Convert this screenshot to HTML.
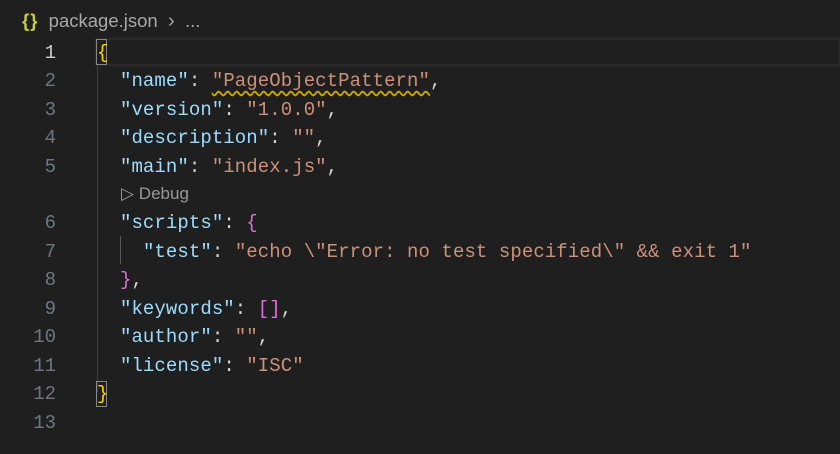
<!DOCTYPE html>
<html><head><style>
body{margin:0;width:840px;height:454px;background:#1f1f1f;overflow:hidden;position:relative;font-family:"Liberation Mono",monospace;}
.bc{position:absolute;top:10px;left:22px;font:18.5px "Liberation Sans",sans-serif;color:#a9a9a9;white-space:pre}
.bc .ic{color:#cbcb41;font-weight:bold;letter-spacing:1px}
.ln{position:absolute;left:0;width:56px;text-align:right;color:#6e7681;font-size:19px;line-height:28px}
.cd{position:absolute;left:97px;font-size:19px;line-height:28px;white-space:pre;color:#d4d4d4;letter-spacing:0.08px}
.k{color:#9cdcfe}.s{color:#ce9178}.y{color:#ffd700}.p{color:#da70d6}
.cur{position:absolute;left:94px;right:0;top:38px;height:28px;border:2px solid #282828;box-sizing:border-box}
.g{position:absolute;width:1px;background:#404040}
</style></head><body>
<div class="bc"><span class="ic">{}</span>  package.json  <span style="font-size:20px">›</span>  ...</div>
<div class="cur"></div>
<div class="g" style="left:97px;top:66px;height:326px"></div>
<div class="g" style="left:120px;top:236px;height:28px;background:#5a5a5a"></div>
<div style="position:absolute;left:96px;top:39px;width:11px;height:26px;border:1px solid #888;box-sizing:border-box"></div>
<div class="ln" style="top:39px;color:#ccc">1</div>
<div class="ln" style="top:67px">2</div>
<div class="ln" style="top:96px">3</div>
<div class="ln" style="top:124px">4</div>
<div class="ln" style="top:153px">5</div>
<div class="ln" style="top:209px">6</div>
<div class="ln" style="top:238px">7</div>
<div class="ln" style="top:266px">8</div>
<div class="ln" style="top:295px">9</div>
<div class="ln" style="top:323px">10</div>
<div class="ln" style="top:352px">11</div>
<div class="ln" style="top:380px">12</div>
<div class="ln" style="top:409px">13</div>
<div class="cd" style="top:39px"><span class="y">{</span></div>
<div class="cd" style="top:67px">  <span class="k">"name"</span>: <span class="s" style="text-decoration:underline wavy #cca700;text-underline-offset:4px">"PageObjectPattern"</span>,</div>
<div class="cd" style="top:96px">  <span class="k">"version"</span>: <span class="s">"1.0.0"</span>,</div>
<div class="cd" style="top:124px">  <span class="k">"description"</span>: <span class="s">""</span>,</div>
<div class="cd" style="top:153px">  <span class="k">"main"</span>: <span class="s">"index.js"</span>,</div>
<div style="position:absolute;top:184px;left:121px;font:17px 'Liberation Sans',sans-serif;color:#999">▷ Debug</div>
<div class="cd" style="top:209px">  <span class="k">"scripts"</span>: <span class="p">{</span></div>
<div class="cd" style="top:238px">    <span class="k">"test"</span>: <span class="s">"echo \"Error: no test specified\" &amp;&amp; exit 1"</span></div>
<div class="cd" style="top:266px">  <span class="p">}</span>,</div>
<div class="cd" style="top:295px">  <span class="k">"keywords"</span>: <span class="p">[]</span>,</div>
<div class="cd" style="top:323px">  <span class="k">"author"</span>: <span class="s">""</span>,</div>
<div class="cd" style="top:352px">  <span class="k">"license"</span>: <span class="s">"ISC"</span></div>
<div class="cd" style="top:380px"><span class="y">}</span></div>
<div style="position:absolute;left:96px;top:381px;width:11px;height:26px;border:1px solid #888;box-sizing:border-box"></div>
</body></html>
